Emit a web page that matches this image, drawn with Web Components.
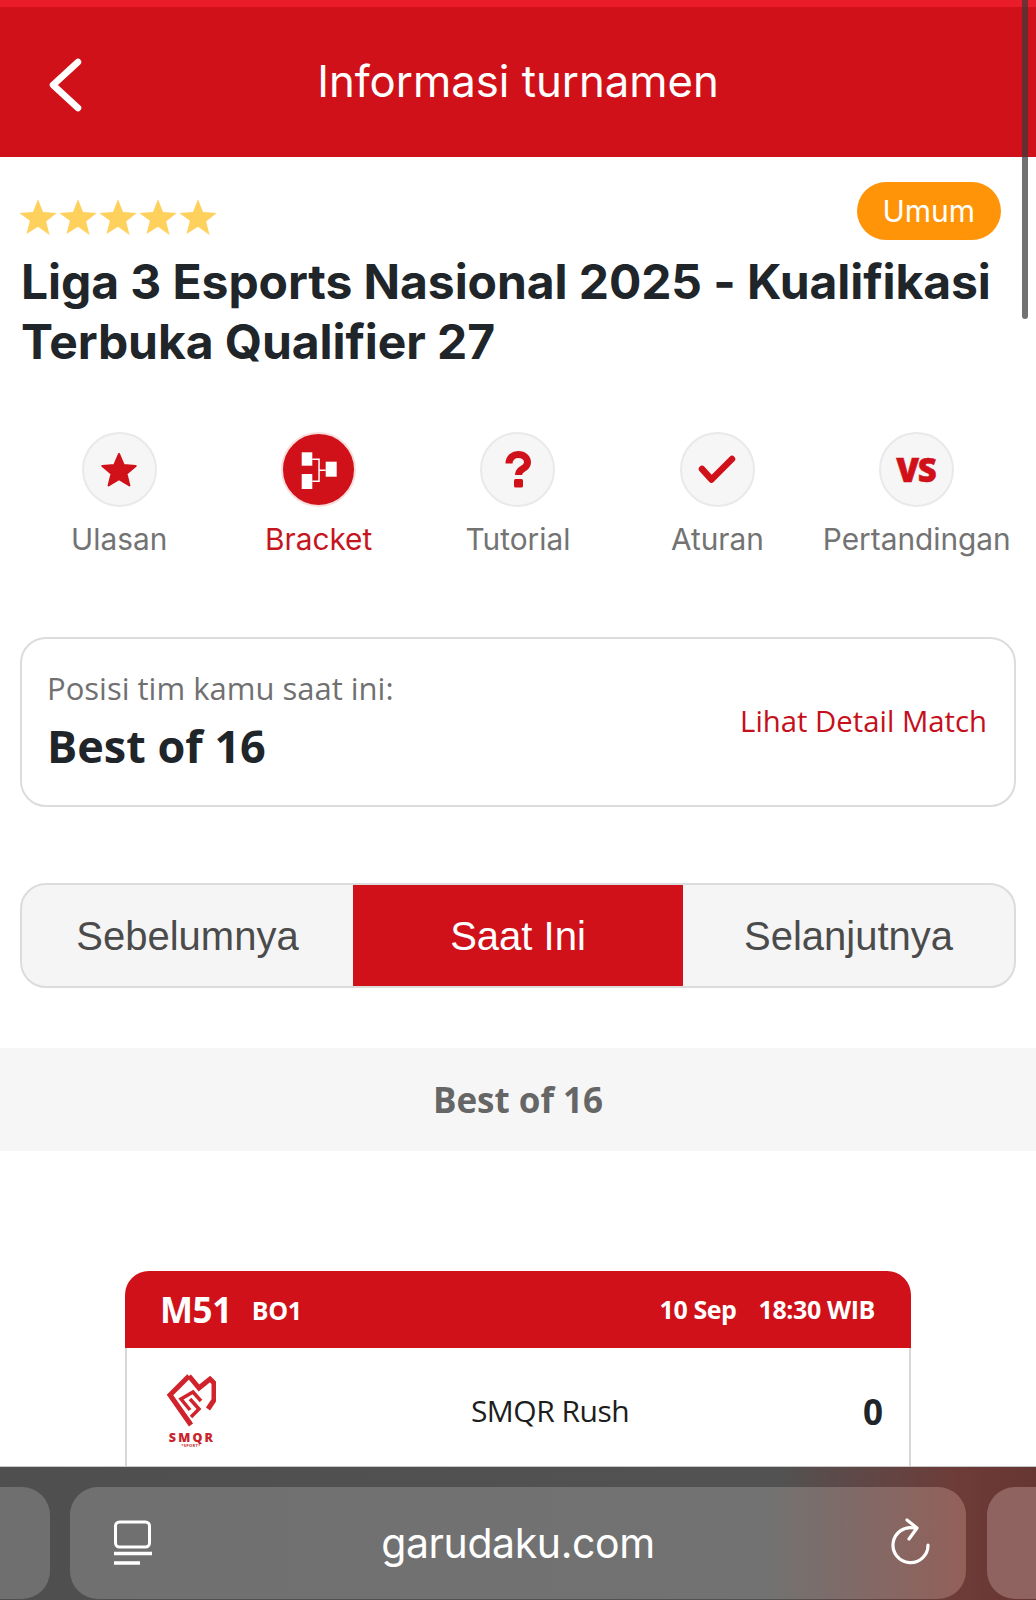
<!DOCTYPE html>
<html lang="id">
<head>
<meta charset="utf-8">
<title>Informasi turnamen</title>
<style>
  html, body { margin: 0; padding: 0; background: #fff; }
  body { width: 1036px; height: 1600px; overflow: hidden; position: relative; font-family: "Inter", "Liberation Sans", sans-serif; }
</style>
</head>
<body>
<app-header>Informasi turnamen</app-header>
<tournament-title badge="Umum">Liga 3 Esports Nasional 2025 - Kualifikasi Terbuka Qualifier 27</tournament-title>
<nav-icons></nav-icons>
<position-card></position-card>
<round-tabs></round-tabs>
<round-band>Best of 16</round-band>
<match-card></match-card>
<browser-bar></browser-bar>
<page-scrollbar></page-scrollbar>

<script>
class AppHeader extends HTMLElement {
  connectedCallback() {
    this.attachShadow({ mode: 'open' });
    this.shadowRoot.innerHTML = `
      <style>
        :host { display: block; background: #d0111a; border-top: 7px solid #ea1c2a; height: 150px; position: relative; }
        .bar { height: 100%; display: flex; align-items: center; justify-content: center; box-sizing: border-box; }
        .title { color: #fff; font: 400 43.700px/48px "Inter", sans-serif; }
        svg { position: absolute; left: 46px; top: 48px; }
      </style>
      <div class="bar">
        <svg width="40" height="60" viewBox="0 0 40 60" fill="none"><path d="M32 7 L7 30 L32 53" stroke="#fff" stroke-width="6.5" stroke-linecap="round" stroke-linejoin="round"/></svg>
        <span class="title"><slot></slot></span>
      </div>`;
  }
}
customElements.define('app-header', AppHeader);

class TournamentTitle extends HTMLElement {
  connectedCallback() {
    this.attachShadow({ mode: 'open' });
    const star = '<svg width="38" height="38" viewBox="0 0 24 24"><path fill="#fdd15b" d="M12 .8l3.2 8.1 8.6.5-6.7 5.5 2.2 8.4L12 18.1l-7.3 4.7 2.2-8.4L.2 9.4l8.6-.5z"/></svg>';
    this.shadowRoot.innerHTML = `
      <style>
        :host { display: block; padding: 25px 36px 0 20px; position: relative; height: 248px; box-sizing: border-box; }
        .top { display: flex; justify-content: space-between; align-items: flex-start; height: 66px; }
        .stars { display: flex; gap: 2px; margin-top: 16px; margin-left: -1px; }
        .badge { background: #ff9408; color: #fff; font: 400 30px/58px "Inter", sans-serif; padding: 0 26px 0 25px; height: 58px; border-radius: 29px; margin-right: -1px; }
        h1 { margin: 0; font: 700 48px/60px "Inter", sans-serif; letter-spacing: -0.08px; color: #20252a; padding-left: 1px; margin-top: 4px; margin-right: -20px; }
      </style>
      <div class="top"><div class="stars">${star.repeat(5)}</div><div class="badge">${this.getAttribute('badge')}</div></div>
      <h1><slot></slot></h1>`;
  }
}
customElements.define('tournament-title', TournamentTitle);

class NavIcons extends HTMLElement {
  connectedCallback() {
    this.attachShadow({ mode: 'open' });
    const red = '#d0111a';
    const items = [
      ['Ulasan', `<svg width="38" height="38" viewBox="0 0 38 38"><path fill="${red}" stroke="${red}" stroke-width="2" stroke-linejoin="round" d="M19 3l4.700 11 12 1-9.200 7.800 2.900 11.700L19 28.200 8.600 34.500l2.900-11.700L2.300 15l12-1z"/></svg>`],
      ['Bracket', `<svg width="40" height="40" viewBox="0 0 40 40" fill="#fff"><rect x="2.700" y="2.300" width="10.600" height="13.400"/><rect x="2.700" y="24" width="10.600" height="15"/><rect x="26.700" y="11.700" width="11" height="15"/><path d="M13.300 8.500h7.500v11h5.900v1.500h-5.900v11h-7.500V30.500h6V21.800v-2.300V10h-6z"/></svg>`, true],
      ['Tutorial', `<svg width="26" height="38" viewBox="0 0 26 38"><path fill="none" stroke="${red}" stroke-width="7" stroke-linejoin="round" d="M4 12.500C4 6.500 9 3.500 13 3.500c6 0 9.500 3.500 9.500 8 0 3.500-2.500 5-5 6.500-2.500 1.500-4 3-4 6"/><rect x="9" y="28" width="9" height="8.500" rx="1.500" fill="${red}"/></svg>`],
      ['Aturan', `<svg width="38" height="29" viewBox="0 0 38 29"><path fill="none" stroke="${red}" stroke-width="6.500" stroke-linecap="round" stroke-linejoin="round" d="M4 14l9.500 10.500L34 4"/></svg>`],
      ['Pertandingan', `<span class="vs">VS</span>`]
    ];
    this.shadowRoot.innerHTML = `
      <style>
        :host { display: grid; grid-template-columns: repeat(5, 199.4px); margin-left: 19.500px; height: 232px; align-content: start; padding-top: 27px; box-sizing: border-box; }
        .item { display: flex; flex-direction: column; align-items: center; color: #737373; font: 400 29.800px/36px "Inter", sans-serif; white-space: nowrap; }
        .circle { width: 71px; height: 71px; border-radius: 50%; background: #f6f6f6; border: 2px solid #e9e9e9; display: flex; align-items: center; justify-content: center; margin-bottom: 14px; }
        .on .circle { background: ${red}; border-color: #f9dcdc; }
        .on { color: #c5161f; }
        .vs { color: ${red}; font: 800 33px/1 "Open Sans", sans-serif; letter-spacing: -1.500px; -webkit-text-stroke: 0.5px ${red}; margin-right: 2px; }
      </style>
      ${items.map(i => `<div class="item${i[2] ? ' on' : ''}"><div class="circle">${i[1]}</div>${i[0]}</div>`).join('')}`;
  }
}
customElements.define('nav-icons', NavIcons);

class PositionCard extends HTMLElement {
  connectedCallback() {
    this.attachShadow({ mode: 'open' });
    this.shadowRoot.innerHTML = `
      <style>
        :host { display: flex; margin: 0 20px 0 20px; height: 170px; box-sizing: border-box; border: 2px solid #dcdcdc; border-radius: 26px; padding: 0 27px 0 25px; align-items: center; justify-content: space-between; font-family: "Open Sans", sans-serif; }
        .lbl { color: #707070; font-size: 31px; line-height: 38px; margin-top: -2px; }
        .val { color: #20252a; font-size: 45px; font-weight: 700; line-height: 54px; margin-top: 12px; }
        a { color: #c5101b; font-size: 29.300px; margin-top: -2px; }
      </style>
      <div><div class="lbl">Posisi tim kamu saat ini:</div><div class="val">Best of 16</div></div>
      <a>Lihat Detail Match</a>`;
  }
}
customElements.define('position-card', PositionCard);

class RoundTabs extends HTMLElement {
  connectedCallback() {
    this.attachShadow({ mode: 'open' });
    this.shadowRoot.innerHTML = `
      <style>
        :host { display: grid; grid-template-columns: 1fr 330px 1fr; margin: 76px 20px 0 20px; height: 105px; box-sizing: border-box; border: 2px solid #dcdcdc; border-radius: 26px; background: #f5f5f5; overflow: hidden; font: 400 40px/1 "Liberation Sans", sans-serif; color: #4b4b4b; }
        div { display: flex; align-items: center; justify-content: center; }
        .on { background: #d0111a; color: #fff; }
      </style>
      <div>Sebelumnya</div><div class="on">Saat Ini</div><div>Selanjutnya</div>`;
  }
}
customElements.define('round-tabs', RoundTabs);

class RoundBand extends HTMLElement {
  connectedCallback() {
    this.attachShadow({ mode: 'open' });
    this.shadowRoot.innerHTML = `
      <style>
        :host { display: flex; margin-top: 60px; height: 103px; background: #f6f6f6; align-items: center; justify-content: center; color: #666; font: 700 35px/1 "Open Sans", sans-serif; }
      </style>
      <slot></slot>`;
  }
}
customElements.define('round-band', RoundBand);

class MatchCard extends HTMLElement {
  connectedCallback() {
    this.attachShadow({ mode: 'open' });
    this.shadowRoot.innerHTML = `
      <style>
        :host { display: block; margin: 120px 125px 0 125px; font-family: "Open Sans", sans-serif; }
        .head { background: #d0111a; color: #fff; height: 77px; border-radius: 24px 24px 0 0; display: flex; align-items: center; padding: 0 36px 0 35px; font-weight: 700; font-size: 25px; letter-spacing: -0.4px; }
        .m { font-size: 35px; margin-right: 20px; }
        .right { margin-left: auto; display: flex; gap: 22px; margin-top: -2px; }
        .row { border: solid #d8d8d8; border-width: 0 2px; height: 160px; display: grid; grid-template-columns: 126px 1fr 46px; padding-top: 25px; box-sizing: border-box; align-items: start; }
        .logo { display: flex; flex-direction: column; align-items: center; padding-left: 2px; }
        .logo svg { display: block; }
        .smqr { color: #c9232b; font: 800 12.500px/11px "Open Sans", sans-serif; letter-spacing: 2.200px; margin-top: 4px; margin-right: -2px; }
        .sport { color: #c9232b; font: 700 4px/5px "Open Sans", sans-serif; letter-spacing: .3px; }
        .name { text-align: center; font-size: 30px; line-height: 38px; color: #1d1d1d; margin-top: 19px; letter-spacing: -0.5px; padding-right: 16px; }
        .score { font-weight: 700; font-size: 35px; line-height: 38px; color: #20252a; margin-top: 20px; }
      </style>
      <div class="head"><span class="m">M51</span><span>BO1</span><span class="right"><span>10 Sep</span><span>18:30 WIB</span></span></div>
      <div class="row">
        <div class="logo">
          <svg width="50" height="55" viewBox="0 0 50 55" fill="none" stroke="#d0232b" stroke-width="5" stroke-linejoin="miter">
            <path d="M23 3L4 22l21 30"/>
            <path d="M23 3l10 12 11-9 4 4v17l-6 9"/>
            <path d="M35 28l-8-9-12 7 9 11" stroke-width="3.500"/>
            <path d="M24 26l9 10-8 8" stroke-width="3.500"/>
            <path d="M13 34l12 16" stroke-width="2.500"/>
          </svg>
          <span class="smqr">SMQR</span>
          <span class="sport">*SPORT*</span>
        </div>
        <div class="name">SMQR Rush</div>
        <div class="score">0</div>
      </div>`;
  }
}
customElements.define('match-card', MatchCard);

class BrowserBar extends HTMLElement {
  connectedCallback() {
    this.attachShadow({ mode: 'open' });
    this.shadowRoot.innerHTML = `
      <style>
        :host { display: block; position: absolute; left: 0; right: 0; bottom: 0; height: 134px; background: linear-gradient(90deg, #4f4f4f 0%, #525252 75%, #6e3b37 93%, #653632 100%); border-top: 1px solid #c8c8c8; box-sizing: border-box; overflow: hidden; }
        .pill { position: absolute; top: 20px; height: 112px; border-radius: 28px; }
        .left { left: -40px; width: 90px; background: #6f6f6f; }
        .main { left: 70px; width: 896px; background: linear-gradient(90deg, #707070 0%, #727272 78%, #936059 100%); display: flex; align-items: center; justify-content: center; color: #fff; font: 400 41px/1 "Inter", sans-serif; letter-spacing: -0.4px; }
        .next { left: 987px; width: 90px; background: #8f6360; }
        svg { position: absolute; }
      </style>
      <div class="pill left"></div>
      <div class="pill main">
        <svg style="left:43px;top:33px" width="40" height="46" viewBox="0 0 40 46" fill="none" stroke="#fff"><rect x="2.500" y="2" width="34" height="25" rx="4" stroke-width="3"/><path d="M1 33.500h38M1 43h26" stroke-width="3.500"/></svg>
        <span>garudaku.com</span>
        <svg style="left:821px;top:31px" width="42" height="50" viewBox="0 0 42 50" fill="none" stroke="#fff" stroke-width="3.200" stroke-linecap="round" stroke-linejoin="round"><path d="M37 27a17.500 17.500 0 1 1-14-17"/><path d="M16 2l10 8-8 11"/></svg>
      </div>
      <div class="pill next"></div>`;
  }
}
customElements.define('browser-bar', BrowserBar);

class PageScrollbar extends HTMLElement {
  connectedCallback() {
    this.attachShadow({ mode: 'open' });
    this.shadowRoot.innerHTML = `
      <style>
        :host { display: block; position: absolute; left: 1022px; top: 0; width: 6px; height: 319px; background: rgba(60,60,60,.72); border-radius: 0 0 3px 3px; }
      </style>`;
  }
}
customElements.define('page-scrollbar', PageScrollbar);
</script>
</body>
</html>
